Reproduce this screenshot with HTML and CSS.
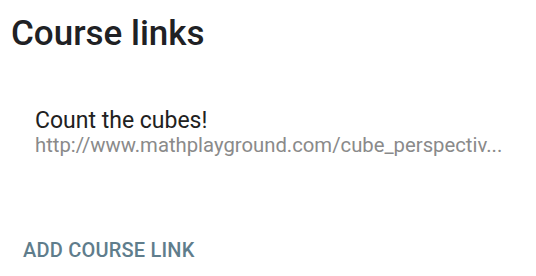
FILE: index.html
```html
<!DOCTYPE html>
<html>
<head>
<meta charset="utf-8">
<link rel="stylesheet" href="styles.css">
</head>
<body>
<div class="page">
  <h1 class="title">Course links</h1>
  <div class="link-item">
    <div class="link-name">Count the cubes!</div>
    <div class="link-url">http://www.mathplayground.com/cube_perspectiv...</div>
  </div>
  <div class="add-link">ADD COURSE LINK</div>
</div>
</body>
</html>
```
FILE: styles.css
```css
html, body {
  margin: 0;
  padding: 0;
  background: #ffffff;
}
body {
  font-family: Roboto, "Noto Sans", sans-serif;
  width: 536px;
  height: 276px;
  overflow: hidden;
}
.page {
  display: flex;
  flex-direction: column;
  padding: 12.5px 0 0 11px;
}
.title {
  margin: 0;
  font-size: 35px;
  font-weight: 500;
  line-height: 42px;
  color: #202124;
}
.link-item {
  margin: 53px 0 0 24px;
  display: flex;
  flex-direction: column;
}
.link-name {
  font-size: 23px;
  line-height: 26px;
  color: #212121;
}
.link-url {
  font-size: 20.3px;
  line-height: 22px;
  color: #8a8a8a;
  white-space: nowrap;
}
.add-link {
  margin: 82.5px 0 0 12px;
  font-size: 20px;
  letter-spacing: 0.2px;
  font-weight: 500;
  color: #5f7d8c;
  line-height: 24px;
}
```
